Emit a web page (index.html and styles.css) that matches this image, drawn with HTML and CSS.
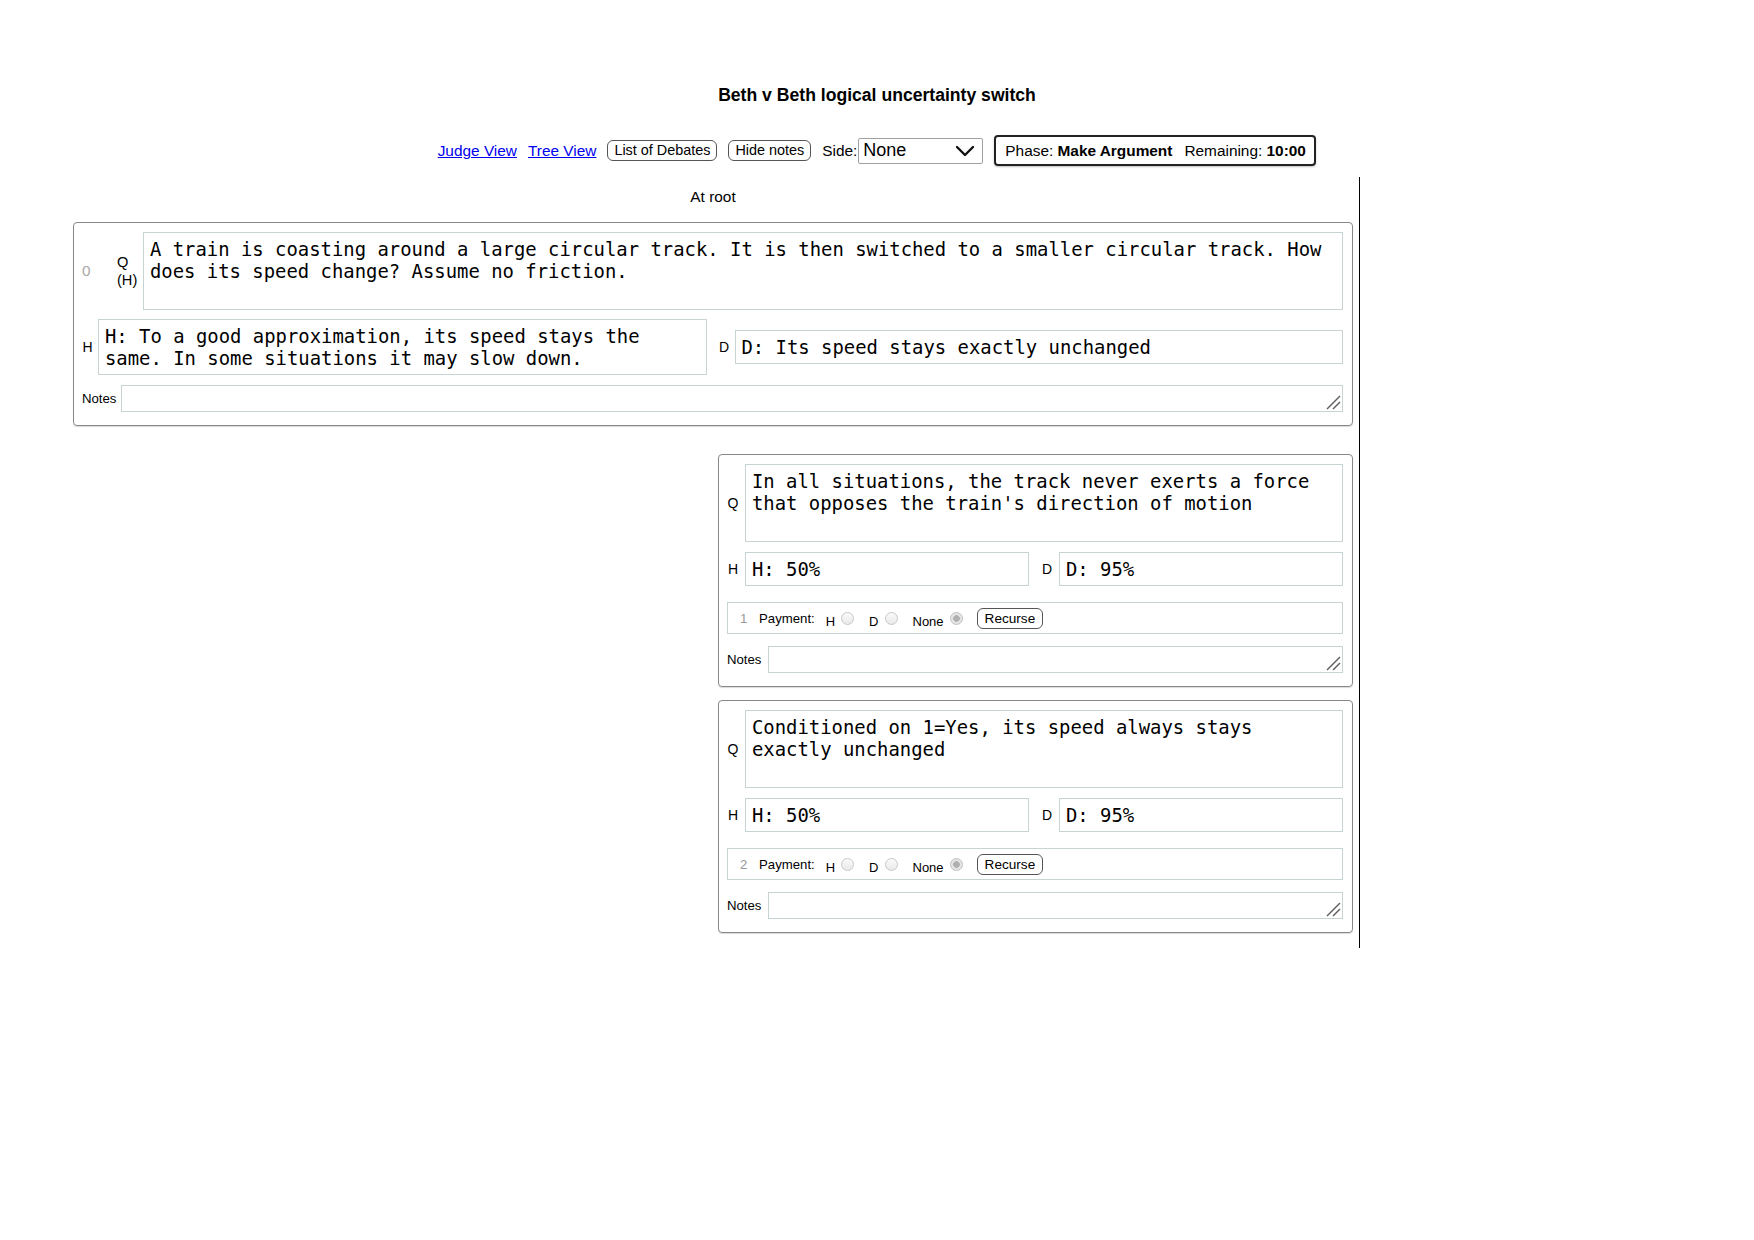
FILE: index.html
```html
<!DOCTYPE html>
<html>
<head>
<meta charset="utf-8">
<title>Beth v Beth logical uncertainty switch</title>
<link rel="stylesheet" href="styles.css">
</head>
<body>
<header class="header">
  <div class="title">Beth v Beth logical uncertainty switch</div>
  <nav class="toolbar">
    <a class="link" href="#">Judge View</a>
    <a class="link" href="#">Tree View</a>
    <button class="btn">List of Debates</button>
    <button class="btn">Hide notes</button>
    <div class="side">
      <span class="side-label">Side:</span>
      <div class="select">
        <span class="select-value">None</span>
        <svg class="chev" width="20" height="12" viewBox="0 0 20 12"><polyline points="2,2 10,10 18,2" fill="none" stroke="#111" stroke-width="2.4" stroke-linecap="round" stroke-linejoin="round"/></svg>
      </div>
    </div>
    <div class="phase">Phase:&nbsp;<b>Make Argument</b><span class="remain">Remaining:&nbsp;<b>10:00</b></span></div>
  </nav>
</header>

<main class="tree">
  <div class="at-root">At root</div>

  <section class="node node-root">
    <div class="row">
      <span class="num num-root">0</span>
      <span class="qlabel">Q<br>(H)</span>
      <textarea class="ta ta-q" readonly>A train is coasting around a large circular track. It is then switched to a smaller circular track. How does its speed change? Assume no friction.</textarea>
    </div>
    <div class="row row-ans">
      <span class="lbl">H</span>
      <textarea class="ta ta-ans ta-two" readonly>H: To a good approximation, its speed stays the same. In some situations it may slow down.</textarea>
      <span class="lbl lbl-d">D</span>
      <textarea class="ta ta-ans ta-one" readonly>D: Its speed stays exactly unchanged</textarea>
    </div>
    <div class="row row-notes">
      <span class="notes-label">Notes</span>
      <div class="notes-wrap">
        <textarea class="ta-notes"></textarea>
        <svg class="grip" width="16" height="16" viewBox="0 0 16 16"><line x1="2" y1="15" x2="15" y2="2" stroke="#5e5e5e" stroke-width="1.4"/><line x1="8" y1="15" x2="15" y2="8" stroke="#5e5e5e" stroke-width="1.4"/></svg>
      </div>
    </div>
  </section>

  <div class="children">
    <div class="child-col">
      <section class="node node-child">
        <div class="row">
          <span class="lbl">Q</span>
          <textarea class="ta ta-q" readonly>In all situations, the track never exerts a force that opposes the train's direction of motion</textarea>
        </div>
        <div class="row row-ans">
          <span class="lbl">H</span>
          <textarea class="ta ta-ans ta-one" readonly>H: 50%</textarea>
          <span class="lbl lbl-d">D</span>
          <textarea class="ta ta-ans ta-one" readonly>D: 95%</textarea>
        </div>
        <div class="payment">
          <span class="pay-num">1</span>
          <span class="pay-label">Payment:</span>
          <span class="opt">H</span><input class="radio" type="radio" name="p1" disabled>
          <span class="opt">D</span><input class="radio" type="radio" name="p1" disabled>
          <span class="opt">None</span><input class="radio radio-last" type="radio" name="p1" checked disabled>
          <button class="btn btn-recurse">Recurse</button>
        </div>
        <div class="row row-notes">
          <span class="notes-label">Notes</span>
          <div class="notes-wrap">
            <textarea class="ta-notes"></textarea>
            <svg class="grip" width="16" height="16" viewBox="0 0 16 16"><line x1="2" y1="15" x2="15" y2="2" stroke="#5e5e5e" stroke-width="1.4"/><line x1="8" y1="15" x2="15" y2="8" stroke="#5e5e5e" stroke-width="1.4"/></svg>
          </div>
        </div>
      </section>

      <section class="node node-child">
        <div class="row">
          <span class="lbl">Q</span>
          <textarea class="ta ta-q" readonly>Conditioned on 1=Yes, its speed always stays exactly unchanged</textarea>
        </div>
        <div class="row row-ans">
          <span class="lbl">H</span>
          <textarea class="ta ta-ans ta-one" readonly>H: 50%</textarea>
          <span class="lbl lbl-d">D</span>
          <textarea class="ta ta-ans ta-one" readonly>D: 95%</textarea>
        </div>
        <div class="payment">
          <span class="pay-num">2</span>
          <span class="pay-label">Payment:</span>
          <span class="opt">H</span><input class="radio" type="radio" name="p2" disabled>
          <span class="opt">D</span><input class="radio" type="radio" name="p2" disabled>
          <span class="opt">None</span><input class="radio radio-last" type="radio" name="p2" checked disabled>
          <button class="btn btn-recurse">Recurse</button>
        </div>
        <div class="row row-notes">
          <span class="notes-label">Notes</span>
          <div class="notes-wrap">
            <textarea class="ta-notes"></textarea>
            <svg class="grip" width="16" height="16" viewBox="0 0 16 16"><line x1="2" y1="15" x2="15" y2="2" stroke="#5e5e5e" stroke-width="1.4"/><line x1="8" y1="15" x2="15" y2="8" stroke="#5e5e5e" stroke-width="1.4"/></svg>
          </div>
        </div>
      </section>
    </div>
  </div>
</main>
</body>
</html>
```
FILE: styles.css
```css
* { box-sizing: border-box; }

html, body {
  margin: 0;
  padding: 0;
  background: #fff;
  color: #000;
  font-family: "Liberation Sans", Arial, Helvetica, sans-serif;
  font-size: 15.4px;
}

.header {
  padding-top: 85px;
}

.title {
  text-align: center;
  font-weight: bold;
  font-size: 17.6px;
  line-height: 21px;
}

.toolbar {
  margin-top: 29px;
  height: 31px;
  display: flex;
  justify-content: center;
  align-items: center;
  gap: 11px;
}

.link {
  color: #0000ee;
  text-decoration: underline;
  font-size: 15.4px;
}

.btn {
  font-family: "Liberation Sans", Arial, Helvetica, sans-serif;
  font-size: 14.4px;
  line-height: 17px;
  color: #000;
  background: #fff;
  border: 1px solid #555;
  border-radius: 6px;
  padding: 1px 6px;
  height: 21px;
}

.side {
  display: flex;
  align-items: center;
}

.side-label {
  font-size: 15.4px;
  margin-right: 1px;
}

.select {
  width: 125px;
  height: 26px;
  border: 1px solid #a0a0a0;
  border-radius: 2px;
  display: flex;
  align-items: center;
  justify-content: space-between;
  padding: 0 7px 0 4px;
}

.select-value {
  font-size: 18px;
}

.chev {
  display: block;
}

.phase {
  height: 31px;
  width: 322px;
  border: 2px solid #222;
  border-radius: 4px;
  box-shadow: 0 1px 2px rgba(0,0,0,0.25);
  display: flex;
  align-items: center;
  padding: 0 9px;
  font-size: 15.4px;
  white-space: nowrap;
}

.remain {
  margin-left: 12px;
}

.tree {
  margin-top: 11px;
  margin-left: 73px;
  width: 1287px;
  padding: 11px 6px 15px 0;
  border-right: 1px solid #000;
}

.at-root {
  text-align: center;
  line-height: 18px;
  font-size: 15.4px;
  margin-bottom: 16px;
}

.node {
  border: 1px solid #888;
  border-radius: 4px;
  box-shadow: 0 1px 1px rgba(0,0,0,0.15);
  padding: 9px 9px 13px 8px;
  display: flex;
  flex-direction: column;
}

.row {
  display: flex;
  align-items: center;
}

.num-root {
  width: 35px;
  color: #aaa;
  font-size: 15.4px;
  text-align: left;
}

.qlabel {
  width: 22px;
  text-align: left;
  font-size: 14.6px;
  line-height: 18px;
  margin-right: 4px;
}

.lbl {
  width: 11px;
  font-size: 14px;
  margin-right: 5px;
  text-align: center;
}

.node-child .lbl {
  width: 12px;
  margin-right: 6px;
}

.lbl-d {
  margin-left: 12px;
}

.ta {
  font-family: "DejaVu Sans Mono", "Liberation Mono", monospace;
  font-size: 18.9px;
  line-height: 22px;
  color: #000;
  border: 1px solid #c8d4d4;
  border-radius: 0;
  padding: 5px 4px 5px 6px;
  resize: none;
  overflow: hidden;
  background: #fff;
  outline: none;
}

.ta-q {
  flex: 1;
  height: 78px;
}

.ta-ans {
  flex: 1;
  min-width: 0;
  padding-right: 8px;
}

.ta-one { height: 34px; }
.ta-two { height: 56px; }

.row-ans {
  margin-top: 9px;
}

.node-child .row-ans {
  margin-top: 10px;
}

.row-notes {
  margin-top: 10px;
}

.node-child .row-notes {
  margin-top: 12px;
}

.notes-label {
  font-size: 13.2px;
  width: 39px;
}

.node-child .notes-label {
  width: 41px;
}

.notes-wrap {
  flex: 1;
  height: 27px;
  position: relative;
}

.ta-notes {
  display: block;
  width: 100%;
  height: 27px;
  border: 1px solid #c8d4d4;
  border-radius: 0;
  font-family: "Liberation Sans", Arial, sans-serif;
  font-size: 13.2px;
  background: #fff;
  outline: none;
  resize: none;
}

.grip {
  position: absolute;
  right: 2px;
  bottom: 2px;
  display: block;
}

.children {
  margin-top: 28px;
  display: grid;
  grid-template-columns: 1fr 1fr;
  column-gap: 10px;
}

.child-col {
  grid-column: 2;
  display: flex;
  flex-direction: column;
  gap: 13px;
}

.payment {
  margin-top: 16px;
  height: 32px;
  border: 1px solid #c8d4d4;
  display: flex;
  align-items: center;
  padding-left: 12px;
  font-size: 13.2px;
}

.pay-num {
  color: #999;
  width: 7px;
  margin-right: 12px;
}

.pay-label {
  margin-right: 11px;
}

.opt {
  font-size: 13px;
  margin-top: 6px;
}

.radio {
  -webkit-appearance: none;
  appearance: none;
  width: 13px;
  height: 13px;
  margin: 0 15px 0 6px;
  border: 1px solid #c8c8c8;
  border-radius: 50%;
  background: linear-gradient(#fafafa, #e9e9e9);
}

.radio:checked {
  background: radial-gradient(circle, #b0b0b0 0, #b0b0b0 3px, #e2e2e2 3.6px, #ebebeb 100%);
  border-color: #c0c0c0;
}

.radio-last {
  margin-right: 14px;
}

.btn-recurse {
  font-size: 13.6px;
  padding: 1px 7px;
  height: 21px;
  line-height: 17px;
}
```
